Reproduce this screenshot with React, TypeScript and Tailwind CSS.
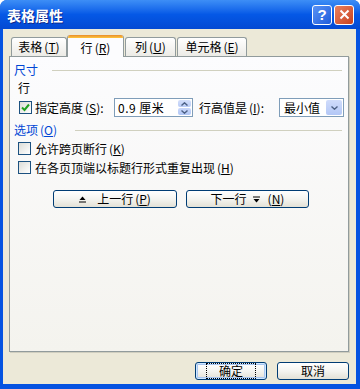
import React from "react";

const font = { fontFamily: '"Noto Sans CJK SC", "Noto Sans", sans-serif' };

function Key({ k }: { k: string }) {
    return <span className="ml-[2px]">(<u>{k}</u>)</span>;
}

function CheckBox({ checked }: { checked?: boolean }) {
    return (
        <div className="w-[13px] h-[13px] border border-[#1C5180] bg-linear-to-br from-[#DCDCD7] to-white flex items-center justify-center shrink-0">
            {checked && (
                <svg width="9" height="9" viewBox="0 0 9 9">
                    <path d="M1 4.5 L3.5 7 L8 1.5" stroke="#21A121" strokeWidth="2" fill="none" />
                </svg>
            )}
        </div>
    );
}

function Chevron({ down }: { down?: boolean }) {
    return (
        <svg width="7" height="4" viewBox="0 0 7 4">
            <path d={down ? "M0.5 0.5 L3.5 3.2 L6.5 0.5" : "M0.5 3.5 L3.5 0.8 L6.5 3.5"} stroke="#4D6185" strokeWidth="1.4" fill="none" />
        </svg>
    );
}

function GroupTitle({ label, w }: { label: React.ReactNode; w: string }) {
    return (
        <div className="flex items-center h-[14px] pl-[4px] pr-[6px]">
            <div className={`${w} text-[#0046D5] text-[12px] leading-[14px]`}>{label}</div>
            <div className="flex-1 h-px bg-[#D0D0BF]"></div>
        </div>
    );
}

function Tab({ label, selected, w }: { label: React.ReactNode; selected?: boolean; w: string }) {
    if (selected) {
        return (
            <div className={`${w} h-[22px] -mb-px relative z-10 flex flex-col bg-[#FCFCFE] border-x border-[#919B9C] rounded-t-[3px] overflow-hidden`}>
                <div className="h-[3px] bg-linear-to-b from-[#E68B2C] to-[#FFC73C]"></div>
                <div className="flex-1 flex items-center justify-center text-[12px] leading-[14px]">{label}</div>
            </div>
        );
    }
    return (
        <div className={`${w} h-[19px] flex items-center justify-center border border-b-0 border-[#919B9C] rounded-t-[3px] bg-linear-to-b from-white to-[#ECEBE6] text-[12px] leading-[14px]`}>
            {label}
        </div>
    );
}

function XpButton({ children, w, isDefault }: { children: React.ReactNode; w: string; isDefault?: boolean }) {
    return (
        <div className={`${w} h-[18px] border border-[#003C74] rounded-[3px] bg-linear-to-b from-white via-[#F4F4F0] to-[#E3E1D6] flex items-center justify-center text-[12px] leading-[14px] ${isDefault ? "shadow-[inset_0_0_0_1px_#CEE7FF,inset_0_0_0_2px_#A9C6F0]" : ""}`}>
            {children}
        </div>
    );
}

export default function App() {
    return (
        <div className="w-[360px] h-[389px] flex flex-col bg-[#0553E1] rounded-t-[7px] overflow-hidden text-black" style={font}>
            {/* title bar */}
            <div className="h-[29px] flex items-center justify-between px-[7px] bg-linear-to-b from-[#3D8EF6] via-[#0558E6] to-[#0349D3] shrink-0">
                <span className="text-white font-bold text-[14px] leading-[16px] [text-shadow:1px_1px_0_#0F2A8C]">表格属性</span>
                <div className="flex gap-[2px] mr-[-1px]">
                    <div className="w-[20px] h-[20px] rounded-[3px] border border-white bg-linear-to-br from-[#5A93F5] to-[#1D5BDB] flex items-center justify-center text-white font-bold text-[15px] leading-none" style={{ fontFamily: '"Liberation Sans", sans-serif' }}>?</div>
                    <div className="w-[20px] h-[20px] rounded-[3px] border border-white bg-linear-to-br from-[#E8805E] to-[#C8401C] flex items-center justify-center">
                        <svg width="11" height="11" viewBox="0 0 11 11">
                            <path d="M1.5 1.5 L9.5 9.5 M9.5 1.5 L1.5 9.5" stroke="white" strokeWidth="2" />
                        </svg>
                    </div>
                </div>
            </div>

            {/* client area */}
            <div className="flex-1 ml-[3px] mr-[4px] mb-[5px] bg-[#ECE9D8] flex flex-col pt-[6px] pl-[6px] pr-[7px]">
                <div className="flex items-end h-[21px] ml-[2px]">
                    <Tab w="w-[56px]" label={<span>表格<Key k="T" /></span>} />
                    <Tab w="w-[57px]" selected label={<span>行<Key k="R" /></span>} />
                    <div className="w-px"></div>
                    <Tab w="w-[51px]" label={<span>列<Key k="U" /></span>} />
                    <div className="w-px"></div>
                    <Tab w="w-[70px]" label={<span>单元格<Key k="E" /></span>} />
                </div>

                <div className="h-[296px] border border-[#919B9C] bg-linear-to-b from-[#FCFCFE] to-[#F4F3EE] shadow-[1px_1px_0_#D0CEBF] flex flex-col text-[12px] leading-[14px]">
                    <div className="mt-[6px]">
                        <GroupTitle w="w-[38px]" label="尺寸" />
                    </div>
                    <div className="mt-[4px] pl-[8px]">行</div>
                    <div className="mt-[3px] flex items-center pl-[9px] h-[19px]">
                        <CheckBox checked />
                        <span className="ml-[3px] w-[79px]">指定高度<Key k="S" />:</span>
                        <div className="w-[79px] h-[19px] border border-[#7F9DB9] bg-white flex items-center pl-[3px] pr-[1px]">
                            <span className="flex-1 tracking-[0.5px]">0.9 厘米</span>
                            <div className="w-[13px] h-[15px] flex flex-col gap-px">
                                <div className="flex-1 rounded-[2px] bg-linear-to-b from-[#D5E0FB] to-[#B9CBF6] flex items-center justify-center"><Chevron /></div>
                                <div className="flex-1 rounded-[2px] bg-linear-to-b from-[#C9D7FA] to-[#B1C6F5] flex items-center justify-center"><Chevron down /></div>
                            </div>
                        </div>
                        <span className="ml-[6px] w-[80px]">行高值是<Key k="I" />:</span>
                        <div className="w-[65px] h-[19px] border border-[#7F9DB9] bg-white flex items-center pl-[4px] pr-[1px]">
                            <span className="flex-1">最小值</span>
                            <div className="w-[16px] h-[15px] rounded-[2px] bg-linear-to-b from-[#D0DCFB] to-[#B3C7F6] flex items-center justify-center"><Chevron down /></div>
                        </div>
                    </div>

                    <div className="mt-[6px]">
                        <GroupTitle w="w-[61px]" label={<span>选项<Key k="O" /></span>} />
                    </div>
                    <div className="mt-[5px] flex items-center pl-[8px] h-[13px]">
                        <CheckBox />
                        <span className="ml-[4px]">允许跨页断行<Key k="K" /></span>
                    </div>
                    <div className="mt-[6px] flex items-center pl-[8px] h-[13px]">
                        <CheckBox />
                        <span className="ml-[4px]">在各页顶端以标题行形式重复出现<Key k="H" /></span>
                    </div>

                    <div className="mt-[16px] flex gap-[9px] pl-[43px]">
                        <XpButton w="w-[124px]">
                            <svg width="7" height="7" viewBox="0 0 7 7" className="mr-[11px]">
                                <path d="M3.5 0.5 L6.5 4 L0.5 4 Z" fill="#000" />
                                <path d="M0 6 L7 6" stroke="#000" strokeWidth="1" />
                            </svg>
                            <span>上一行<Key k="P" /></span>
                        </XpButton>
                        <XpButton w="w-[123px]">
                            <span>下一行</span>
                            <svg width="7" height="7" viewBox="0 0 7 7" className="mx-[6px]">
                                <path d="M0 1 L7 1" stroke="#000" strokeWidth="1" />
                                <path d="M0.5 3 L6.5 3 L3.5 6.5 Z" fill="#000" />
                            </svg>
                            <Key k="N" />
                        </XpButton>
                    </div>
                </div>

                <div className="mt-[10px] flex justify-end gap-[10px] pr-0">
                    <XpButton w="w-[72px]" isDefault>
                        <span className="px-[12px] outline outline-1 outline-dotted outline-black">确定</span>
                    </XpButton>
                    <XpButton w="w-[72px]">取消</XpButton>
                </div>
            </div>
        </div>
    );
}
